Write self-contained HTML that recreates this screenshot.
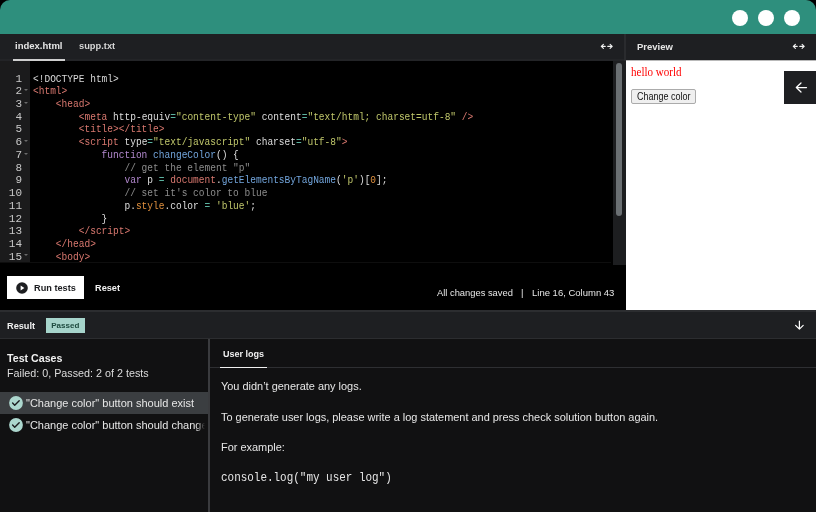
<!DOCTYPE html>
<html><head><meta charset="utf-8">
<style>
*{box-sizing:border-box;margin:0;padding:0}
html,body{width:816px;height:512px;overflow:hidden;background:#000}
body{position:relative;font-family:"Liberation Sans",sans-serif}
.abs{position:absolute}
#frame{will-change:transform;position:absolute;left:0;top:0;width:816px;height:512px;border-radius:10px 10px 0 0;overflow:hidden;background:#111112}
#hdr{left:0;top:0;width:816px;height:34px;background:#2e8f7d}
.dot{position:absolute;top:10px;width:16px;height:16px;border-radius:50%;background:#fff}
#tabs{left:0;top:34px;width:624px;height:27px;background:#1e1f22}
#tabs .bl{position:absolute;left:0;bottom:0;width:624px;height:2px;background:#232427}
.tab{position:absolute;top:5px;font-weight:bold;font-size:9.5px;line-height:14px;color:#e6e6e6}
#ul{position:absolute;left:13px;top:25px;width:52px;height:2px;background:#cfcfcf}
.swap{position:absolute;color:#e6e6e6;font-size:10px;font-weight:bold}
#vdiv{left:624px;top:34px;width:2px;height:27px;background:#2a2b2e}
#ptabs{left:626px;top:34px;width:190px;height:26px;background:#1e1f22}
#pline{left:626px;top:60px;width:190px;height:1px;background:#b9b9b9}
#preview{left:626px;top:61px;width:190px;height:249px;background:#fff}
#code{left:0;top:61px;width:613px;height:201px;background:#000;overflow:hidden}
#gutter{left:0;top:0;width:30px;height:201px;background:#1b1b1c}
.ln{position:absolute;left:0;width:22px;text-align:right;font-family:"Liberation Mono",monospace;font-size:11px;line-height:13px;color:#c8c8c8;transform-origin:right top}
.fold{position:absolute;left:24px;width:0;height:0;border-left:2px solid transparent;border-right:2px solid transparent;border-top:2px solid #6a6a6a}
.cl{position:absolute;left:33px;white-space:pre;font-family:"Liberation Mono",monospace;font-size:11px;line-height:13px;color:#dedede;transform:scaleX(0.866);transform-origin:left top}
.t{color:#d9786f}.a{color:#d8d8d8}.e{color:#5cb3a0}.s{color:#c0c76b}.k{color:#b48ad0}.f{color:#72a5dc}.c{color:#8c8c8c}.n{color:#e0903e}
#sbtrack{left:613px;top:61px;width:13px;height:204px;background:#1d1e20}
#sbthumb{left:616px;top:63px;width:6px;height:153px;border-radius:3px;background:#6b7073}
#status{left:0;top:262px;width:626px;height:48px;background:#000}
#hsb{left:0;top:262px;width:611px;height:1px;background:#0e0e0e}
#run{left:7px;top:276px;width:77px;height:23px;background:#fff}
#resbar{left:0;top:310px;width:816px;height:29px;background:#1e1f22;border-top:2px solid #2c2d30;border-bottom:1px solid #2c2d30}
#left{left:0;top:339px;width:208px;height:173px;background:#111112}
#bdiv{left:208px;top:339px;width:2px;height:173px;background:#3a3b3e}
#right{left:210px;top:339px;width:606px;height:173px;background:#111112}

#hw{left:5px;top:4.5px;font-family:"Liberation Serif",serif;font-size:11.6px;transform:scaleX(0.95);transform-origin:left top;color:#f00;line-height:14px;white-space:nowrap}
#cbtn{left:5px;top:28px;width:65px;height:15px;border:1px solid #ababab;border-radius:2px;background:#efefef;font-size:9px;line-height:14px;text-align:center;color:#111;white-space:nowrap}
#back{left:158px;top:10px;width:32px;height:33px;background:#1e1f22}
#runt{left:27px;top:6px;font-weight:bold;font-size:9.2px;line-height:12px;color:#1b1c1f;white-space:nowrap}
#reset{left:95px;top:282px;font-weight:bold;font-size:9.2px;line-height:12px;color:#f0f0f0}
#saved,#lc,#pipe{top:287px;font-size:9.5px;line-height:12px;color:#e6e6e6;white-space:nowrap}
#saved{left:437px}#pipe{left:521px}#lc{left:532px}
#restxt{left:7px;top:8px;font-weight:bold;font-size:9.2px;line-height:12px;color:#f0f0f0}
#passed{left:46px;top:6px;width:38.6px;height:15px;background:#a6d4cb;color:#1d4a3f;font-weight:bold;font-size:8px;line-height:16px;text-align:center}
#tc{left:7px;top:12px;font-weight:bold;font-size:10.65px;line-height:14px;color:#f0f0f0;white-space:nowrap}
#tcsub{left:7px;top:27px;font-size:10.75px;line-height:14px;color:#dcdcdc;white-space:nowrap}
#hl{left:0;top:53px;width:208px;height:22px;background:#3b3e41}
.chk{left:8.5px}
.tct{left:26px;font-size:11px;line-height:14px;color:#e6e6e6;white-space:nowrap;width:179px;overflow:hidden;-webkit-mask-image:linear-gradient(90deg,#000 170px,transparent 179px)}
#ulgline{left:0;top:28px;width:606px;height:1px;background:#2e2f32}
#ulg{left:13px;top:9px;font-weight:bold;font-size:9px;line-height:12px;color:#f0f0f0;white-space:nowrap}
#ulgul{left:10px;top:27.5px;width:47px;height:1.5px;background:#f0f0f0}
.lg{left:11px;font-size:10.95px;line-height:14px;color:#e6e6e6;white-space:nowrap}
#cons{left:11px;top:132px;font-family:"Liberation Mono",monospace;font-size:12px;transform:scaleX(0.912);transform-origin:left top;line-height:14px;color:#e6e6e6;white-space:nowrap}
.ig{position:absolute;width:1px;background:repeating-linear-gradient(180deg,#1f1f1f 0 1px,transparent 1px 2px)}
</style></head><body>
<div id="frame">
  <div id="hdr" class="abs">
    <div class="dot" style="left:732px"></div>
    <div class="dot" style="left:758px"></div>
    <div class="dot" style="left:784px"></div>
  </div>
  <div id="tabs" class="abs">
    <div class="bl"></div>
    <div class="tab" style="left:15px">index.html</div>
    <div class="tab" style="left:79px;font-size:9.3px;color:#d6d6d6">supp.txt</div>
    <div id="ul"></div>
    <svg class="abs" style="left:598px;top:6px" width="18" height="12" viewBox="0 0 18 12"><path d="M7.2 6.4H3.4M5.4 4.4L3.3 6.4L5.4 8.4M9.8 6.4H14M12.1 4.4L14.2 6.4L12.1 8.4" fill="none" stroke="#f2f2f2" stroke-width="1.15" stroke-linecap="round" stroke-linejoin="round"/></svg>
  </div>
  <div id="vdiv" class="abs"></div>
  <div id="ptabs" class="abs">
    <div class="tab" style="left:11px;top:6px">Preview</div>
    <svg class="abs" style="left:164px;top:6px" width="18" height="12" viewBox="0 0 18 12"><path d="M7.2 6.4H3.4M5.4 4.4L3.3 6.4L5.4 8.4M9.8 6.4H14M12.1 4.4L14.2 6.4L12.1 8.4" fill="none" stroke="#f2f2f2" stroke-width="1.15" stroke-linecap="round" stroke-linejoin="round"/></svg>
  </div>
  <div id="pline" class="abs"></div>
  <div id="preview" class="abs">
    <div id="hw" class="abs">hello world</div>
    <div id="cbtn" class="abs"><span style="display:inline-block;transform:scaleX(0.9);font-size:10px">Change color</span></div>
    <div id="back" class="abs"><svg width="32" height="32" viewBox="0 0 32 32"><path d="M22.5 16.5H12.3M17 12L12.3 16.5L17 21" fill="none" stroke="#fff" stroke-width="1.25" stroke-linecap="round" stroke-linejoin="round"/></svg></div>
  </div>

  <div id="code" class="abs">
    <div id="gutter" class="abs"></div>
<div class="ln" style="top:11.60px">1</div>
<div class="cl" style="top:11.60px"><span class="a">&lt;!DOCTYPE html&gt;</span></div>
<div class="ln" style="top:24.32px">2</div>
<div class="fold" style="top:27.92px"></div>
<div class="cl" style="top:24.32px"><span class="t">&lt;html&gt;</span></div>
<div class="ln" style="top:37.04px">3</div>
<div class="fold" style="top:40.64px"></div>
<div class="cl" style="top:37.04px">    <span class="t">&lt;head&gt;</span></div>
<div class="ln" style="top:49.76px">4</div>
<div class="cl" style="top:49.76px">        <span class="t">&lt;meta</span> http-equiv<span class="e">=</span><span class="s">"content-type"</span> content<span class="e">=</span><span class="s">"text/html; charset=utf-8"</span> <span class="t">/&gt;</span></div>
<div class="ln" style="top:62.48px">5</div>
<div class="cl" style="top:62.48px">        <span class="t">&lt;title&gt;&lt;/title&gt;</span></div>
<div class="ln" style="top:75.20px">6</div>
<div class="fold" style="top:78.80px"></div>
<div class="cl" style="top:75.20px">        <span class="t">&lt;script</span> type<span class="e">=</span><span class="s">"text/javascript"</span> charset<span class="e">=</span><span class="s">"utf-8"</span><span class="t">&gt;</span></div>
<div class="ln" style="top:87.92px">7</div>
<div class="fold" style="top:91.52px"></div>
<div class="cl" style="top:87.92px">            <span class="k">function</span> <span class="f">changeColor</span>() {</div>
<div class="ln" style="top:100.64px">8</div>
<div class="cl" style="top:100.64px">                <span class="c">// get the element "p"</span></div>
<div class="ln" style="top:113.36px">9</div>
<div class="cl" style="top:113.36px">                <span class="k">var</span> p <span class="e">=</span> <span class="t">document</span>.<span class="f">getElementsByTagName</span>(<span class="s">'p'</span>)[<span class="n">0</span>];</div>
<div class="ln" style="top:126.08px">10</div>
<div class="cl" style="top:126.08px">                <span class="c">// set it's color to blue</span></div>
<div class="ln" style="top:138.80px">11</div>
<div class="cl" style="top:138.80px">                p.<span class="n">style</span>.color <span class="e">=</span> <span class="s">'blue'</span>;</div>
<div class="ln" style="top:151.52px">12</div>
<div class="cl" style="top:151.52px">            }</div>
<div class="ln" style="top:164.24px">13</div>
<div class="cl" style="top:164.24px">        <span class="t">&lt;/script&gt;</span></div>
<div class="ln" style="top:176.96px">14</div>
<div class="cl" style="top:176.96px">    <span class="t">&lt;/head&gt;</span></div>
<div class="ln" style="top:189.68px">15</div>
<div class="fold" style="top:193.28px"></div>
<div class="cl" style="top:189.68px">    <span class="t">&lt;body&gt;</span></div>
  </div>
    <div id="status" class="abs"></div>
  <div id="hsb" class="abs"></div>
  <div id="sbtrack" class="abs"></div>
  <div id="sbthumb" class="abs"></div>
  <div id="run" class="abs"><svg class="abs" style="left:9px;top:6px" width="12" height="12" viewBox="0 0 12 12"><circle cx="6" cy="6" r="5.8" fill="#1d1e21"/><path d="M4.6 3.6L8.4 6L4.6 8.4Z" fill="#fff"/></svg><span id="runt" class="abs">Run tests</span></div>
  <div id="reset" class="abs">Reset</div>
  <div id="saved" class="abs" style="font-size:9.35px">All changes saved</div>
  <div id="pipe" class="abs">|</div>
  <div id="lc" class="abs">Line 16, Column 43</div>
  <div id="resbar" class="abs">
    <div id="restxt" class="abs">Result</div>
    <div id="passed" class="abs">Passed</div>
    <svg class="abs" style="left:793px;top:8px" width="12" height="12" viewBox="0 0 12 12"><path d="M6.4 1.2V9.1M2.6 5.3L6.4 9.1L10.2 5.3" fill="none" stroke="#fff" stroke-width="1.2" stroke-linecap="round" stroke-linejoin="round"/></svg>
  </div>
  <div id="left" class="abs">
    <div id="tc" class="abs">Test Cases</div>
    <div id="tcsub" class="abs">Failed: 0, Passed: 2 of 2 tests</div>
    <div id="hl" class="abs"></div>
    <svg class="abs chk" style="top:57px" width="14" height="14" viewBox="0 0 14 14"><circle cx="7" cy="7" r="6.9" fill="#acd7ce"/><path d="M3.6 7.1L5.7 9.2L10.2 4.8" fill="none" stroke="#1b1c1f" stroke-width="1.4" stroke-linecap="round" stroke-linejoin="round"/></svg>
    <div class="tct abs" style="top:57px">"Change color" button should exist</div>
    <svg class="abs chk" style="top:78.8px" width="14" height="14" viewBox="0 0 14 14"><circle cx="7" cy="7" r="6.9" fill="#acd7ce"/><path d="M3.6 7.1L5.7 9.2L10.2 4.8" fill="none" stroke="#1b1c1f" stroke-width="1.4" stroke-linecap="round" stroke-linejoin="round"/></svg>
    <div class="tct abs" style="top:78.5px">"Change color" button should change</div>
  </div>
  <div id="bdiv" class="abs"></div>
  <div id="right" class="abs">
    <div id="ulgline" class="abs"></div>
    <div id="ulg" class="abs">User logs</div>
    <div id="ulgul" class="abs"></div>
    <div class="lg abs" style="top:40px">You didn’t generate any logs.</div>
    <div class="lg abs" style="top:71px">To generate user logs, please write a log statement and press check solution button again.</div>
    <div class="lg abs" style="top:101px">For example:</div>
    <div id="cons" class="abs">console.log("my user log")</div>
  </div>
</div>
</body></html>
